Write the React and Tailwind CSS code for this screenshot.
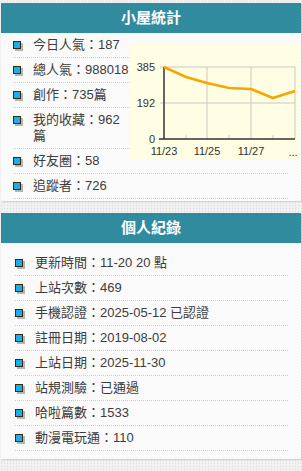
import React from 'react'

const FONT = { fontFamily: '"Liberation Sans", "Noto Sans CJK TC", sans-serif' }

const STATS = ['今日人氣：187', '總人氣：988018', '創作：735篇', '我的收藏：962 篇', '好友圈：58', '追蹤者：726']

const RECORDS = [
  '更新時間：11-20 20 點',
  '上站次數：469',
  '手機認證：2025-05-12 已認證',
  '註冊日期：2019-08-02',
  '上站日期：2025-11-30',
  '站規測驗：已通過',
  '哈啦篇數：1533',
  '動漫電玩通：110',
]

function Item({ children }) {
  return (
    <li className="pl-[20px] indent-[-20px] py-[4px] leading-[16px] border-b border-dotted border-[#d2d2d2]">
      <span className="inline-block w-[8px] h-[8px] mr-[12px] align-[0px] border border-[#3b2a0c] bg-[#18aef0] shadow-[2px_2px_0_#b5b5b5]" />
      {children}
    </li>
  )
}

function Header({ title }) {
  return (
    <div className="h-[30px] flex items-center justify-center bg-[#318b9f] text-white font-bold text-[15px]">
      {title}
    </div>
  )
}

// points in svg coords, values 0..385
const XS = [34, 56, 77, 99, 121, 143, 165]
const YS = [24, 34, 40, 45, 46, 55, 48]

function Chart() {
  const pts = XS.map((x, i) => `${x},${YS[i]}`).join(' ')
  return (
    <svg width="169" height="116" viewBox="0 0 169 116" className="block">
      {[77, 121, 165].map((x) => (
        <line key={x} x1={x} y1="24" x2={x} y2="96" stroke="#c8c8c8" strokeWidth="1" />
      ))}
      <line x1="30" y1="24" x2="165" y2="24" stroke="#c8c8c8" strokeWidth="1" />
      <line x1="30" y1="60" x2="165" y2="60" stroke="#c8c8c8" strokeWidth="1" />
      {[56, 99, 143].map((x) => (
        <line key={x} x1={x} y1="92" x2={x} y2="96" stroke="#c8c8c8" strokeWidth="1" />
      ))}
      <line x1="34" y1="24" x2="34" y2="96" stroke="#333" strokeWidth="1.5" />
      <line x1="29" y1="96" x2="165" y2="96" stroke="#333" strokeWidth="1.5" />
      <polyline points={pts} fill="none" stroke="#f7a600" strokeWidth="2.5" strokeLinejoin="round" />
      <g fontSize="11" fill="#333" style={FONT}>
        <text x="25" y="28" textAnchor="end">385</text>
        <text x="25" y="64" textAnchor="end">192</text>
        <text x="25" y="100" textAnchor="end">0</text>
        <text x="34" y="112" textAnchor="middle">11/23</text>
        <text x="77" y="112" textAnchor="middle">11/25</text>
        <text x="121" y="112" textAnchor="middle">11/27</text>
        <text x="163" y="113" textAnchor="middle">...</text>
      </g>
    </svg>
  )
}

export default function App() {
  return (
    <div
      className="w-[302px] min-h-[471px] pt-[3px] pb-[10px] bg-[#f1f1f1] bg-[radial-gradient(#dcdcdc_1px,transparent_1px)] bg-[length:3px_3px] text-[13px] text-[#3c3c3c]"
      style={FONT}
    >
      <div className="mx-[1px] bg-[#fafafa] shadow-[1px_1px_1px_rgba(0,0,0,0.12)]">
        <Header title="小屋統計" />
        <div className="pl-[12px] pr-[13px] pb-[2px]">
          <div className="float-right mr-[-11px] mt-[10px] w-[169px] h-[116px] bg-[#fffde3]">
            <Chart />
          </div>
          <ul>
            {STATS.map((s) => (
              <Item key={s}>{s}</Item>
            ))}
          </ul>
        </div>
      </div>

      <div className="mx-[1px] mt-[12px] bg-[#fafafa] shadow-[1px_1px_1px_rgba(0,0,0,0.12)]">
        <Header title="個人紀錄" />
        <ul className="pl-[14px] pr-[13px] pt-[8px] pb-[8px]">
          {RECORDS.map((s) => (
            <Item key={s}>{s}</Item>
          ))}
        </ul>
      </div>
    </div>
  )
}
